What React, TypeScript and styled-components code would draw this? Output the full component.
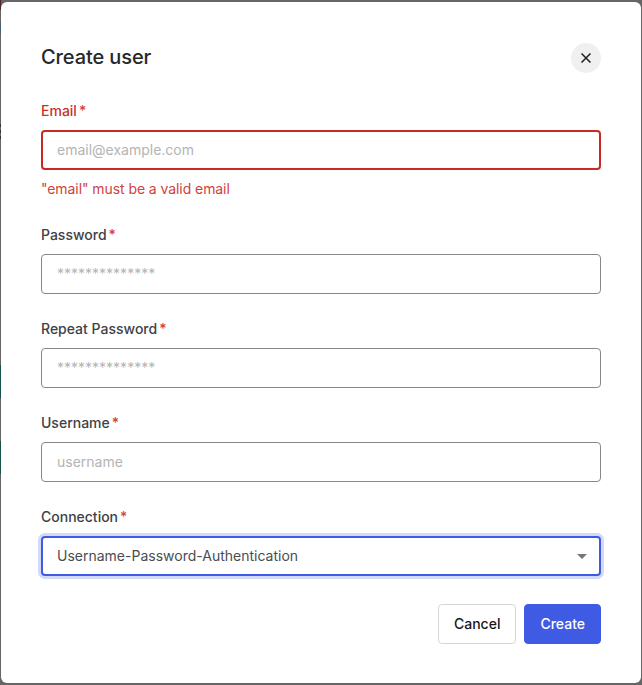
import React from 'react';
import styled, { createGlobalStyle } from 'styled-components';

const GlobalStyle = createGlobalStyle`
  html, body {
    margin: 0;
    padding: 0;
    height: 100%;
    background: #666;
    font-family: Inter, "Liberation Sans", sans-serif;
  }
  * {
    box-sizing: border-box;
  }
`;

// dimmed page behind the dialog only peeks out along the left edge
const Backdrop = styled.div`
  width: 642px;
  height: 685px;
  padding: 2px 1px;
  overflow: hidden;
  background: linear-gradient(
      to bottom,
      #4a2a28 0 10px,
      #666 10px 22px,
      #4d5f73 22px 34px,
      #666 34px 124px,
      #333 124px 127px,
      #666 127px 130px,
      #333 130px 133px,
      #666 133px 136px,
      #333 136px 139px,
      #666 139px 365px,
      #15524a 365px 398px,
      #666 398px 441px,
      #15524a 441px 474px,
      #666 474px
    )
    left top / 1px 100% no-repeat,
    #666;
`;

const Modal = styled.form`
  width: 640px;
  height: 681px;
  background: #fff;
  border-radius: 6px;
  padding: 40px;
  display: flex;
  flex-direction: column;
`;

const Header = styled.div`
  display: flex;
  align-items: center;
  justify-content: space-between;
  width: 560px;
  height: 30px;
  margin-bottom: 29px;
`;

const Title = styled.h2`
  margin: 0;
  font-size: 20px;
  line-height: 30px;
  font-weight: 500;
  letter-spacing: -0.1px;
  color: #25272b;
`;

const CloseButton = styled.button`
  width: 30px;
  height: 30px;
  margin-top: 1px;
  padding: 0;
  border: 0;
  border-radius: 50%;
  background: #f0f0f0;
  color: #1e2023;
  display: flex;
  align-items: center;
  justify-content: center;
`;

const Field = styled.div`
  display: flex;
  flex-direction: column;
  margin-bottom: 25px;
`;

const Label = styled.label<{ $error?: boolean }>`
  font-size: 14px;
  line-height: 20px;
  font-weight: 450;
  margin-bottom: 9px;
  color: ${(p) => (p.$error ? '#c9302a' : '#3e4146')};
`;

const Required = styled.span`
  margin-left: 2px;
  color: #d6403a;
`;

const Input = styled.input<{ $error?: boolean }>`
  width: 560px;
  height: 40px;
  font-family: inherit;
  font-size: 14px;
  color: #3a3d42;
  background: #fff;
  border-radius: 4px;
  outline: none;
  border: ${(p) => (p.$error ? '2px solid #c62a23' : '1px solid #888')};
  padding: 0 ${(p) => (p.$error ? '14px' : '15px')} 1px;
  &::placeholder {
    color: #b4b4b4;
    opacity: 1;
  }
`;

const ErrorText = styled.div`
  margin-top: 9px;
  margin-bottom: 1px;
  font-size: 14px;
  line-height: 20px;
  letter-spacing: -0.07px;
  color: #d0423c;
`;

const SelectWrap = styled.div`
  position: relative;
  width: 560px;
  height: 40px;
`;

const Select = styled.select`
  appearance: none;
  width: 100%;
  height: 100%;
  padding: 0 14px 1px;
  font-family: inherit;
  font-size: 14px;
  color: #4a4d52;
  background: #fff;
  border: 2px solid #3f5be4;
  border-radius: 4px;
  outline: none;
  box-shadow: 0 0 0 3px #d3d9f8;
`;

const Caret = styled.svg`
  position: absolute;
  right: 14px;
  top: 18px;
  pointer-events: none;
`;

const Actions = styled.div`
  display: flex;
  justify-content: flex-end;
  gap: 8px;
  margin-top: 3px;
  width: 560px;
`;

const Button = styled.button<{ $primary?: boolean }>`
  height: 40px;
  padding: 0 15px 1px;
  font-family: inherit;
  font-size: 14px;
  font-weight: 450;
  border-radius: 4px;
  color: ${(p) => (p.$primary ? '#fff' : '#16181b')};
  background: ${(p) => (p.$primary ? '#3f5be4' : '#fff')};
  border: 1px solid ${(p) => (p.$primary ? '#3f5be4' : '#d6d6d6')};
`;

export default function App() {
  return (
    <Backdrop>
      <GlobalStyle />
      <Modal onSubmit={(e) => e.preventDefault()}>
        <Header>
          <Title>Create user</Title>
          <CloseButton type="button" aria-label="Close">
            <svg width="10" height="10" viewBox="0 0 10 10" fill="none">
              <path d="M0.5 0.5l9 9M9.5 0.5l-9 9" stroke="currentColor" strokeWidth="1.5" />
            </svg>
          </CloseButton>
        </Header>

        <Field>
          <Label $error>
            Email<Required>*</Required>
          </Label>
          <Input $error placeholder="email@example.com" />
          <ErrorText>"email" must be a valid email</ErrorText>
        </Field>

        <Field>
          <Label>
            Password<Required>*</Required>
          </Label>
          <Input placeholder="**************" />
        </Field>

        <Field>
          <Label>
            Repeat Password<Required>*</Required>
          </Label>
          <Input placeholder="**************" />
        </Field>

        <Field>
          <Label>
            Username<Required>*</Required>
          </Label>
          <Input placeholder="username" />
        </Field>

        <Field>
          <Label>
            Connection<Required>*</Required>
          </Label>
          <SelectWrap>
            <Select defaultValue="upa">
              <option value="upa">Username-Password-Authentication</option>
            </Select>
            <Caret width="10" height="5" viewBox="0 0 10 5">
              <path d="M0 0h10L5 5z" fill="#777" />
            </Caret>
          </SelectWrap>
        </Field>

        <Actions>
          <Button type="button">Cancel</Button>
          <Button $primary>Create</Button>
        </Actions>
      </Modal>
    </Backdrop>
  );
}
